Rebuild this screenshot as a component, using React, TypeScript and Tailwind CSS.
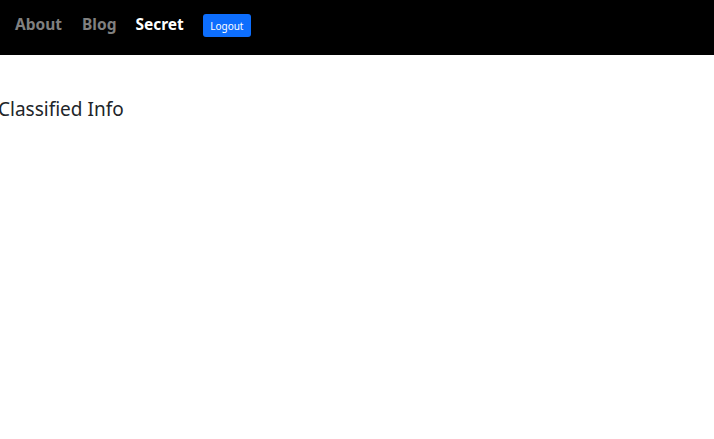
import React from "react";

export default function App() {
  return (
    <div className="min-h-screen bg-white" style={{ fontFamily: '"Noto Sans", "Open Sans", sans-serif' }}>
      <nav className="h-[55px] bg-black flex items-center pl-[15px] pb-[4px]">
        <a className="text-[15.5px] font-bold text-[#808080] leading-none -mt-[2px]">About</a>
        <a className="ml-[20px] text-[15.5px] font-bold text-[#808080] leading-none -mt-[2px]">Blog</a>
        <a className="ml-[19px] text-[15.5px] font-bold text-white leading-none -mt-[2px]">Secret</a>
        <button className="ml-[19px] h-[23px] w-[48px] rounded-[3px] bg-[#0d6efd] text-white text-[10px] leading-none">
          Logout
        </button>
      </nav>
      <h2 className="mt-[42px] -ml-[2px] text-[19px] text-[#212529] leading-[24px]">Classified Info</h2>
    </div>
  );
}
